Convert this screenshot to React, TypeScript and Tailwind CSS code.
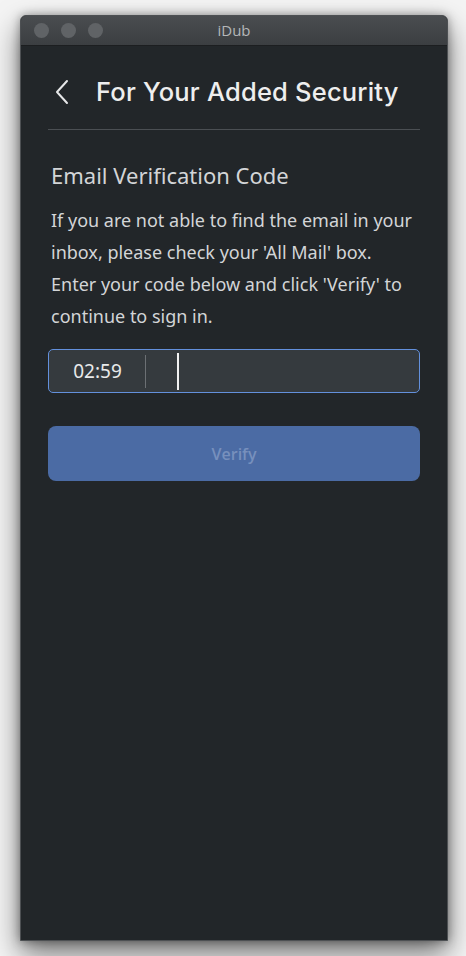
import React from "react";

export default function App() {
  return (
    <div className="w-[466px] h-[956px] pt-[15px] pl-[20px] overflow-hidden bg-[#f4f4f4]">
      <div className="w-[428px] h-[926px] flex flex-col rounded-t-[6px] overflow-hidden border border-[#4d5053] bg-[#222629] shadow-[0_12px_28px_rgba(0,0,0,0.55),0_0_10px_rgba(0,0,0,0.35)]">
        <div className="relative h-[30px] shrink-0 flex items-center bg-gradient-to-b from-[#4a4d50] to-[#3b3e41] border-b border-[#1c1e20]">
          <div className="flex items-center gap-[12px] pl-[13px]">
            <span className="w-[15px] h-[15px] rounded-full bg-[#606366]" />
            <span className="w-[15px] h-[15px] rounded-full bg-[#606366]" />
            <span className="w-[15px] h-[15px] rounded-full bg-[#606366]" />
          </div>
          <div className="absolute inset-0 flex items-center justify-center text-[15px] text-[#b4b6b8]" style={{ fontFamily: '"Open Sans", "Noto Sans", sans-serif' }}>
            iDub
          </div>
        </div>
        <div className="flex-1 px-[27px]">
          <div className="flex items-center h-[84px] pt-[9px] border-b border-[#4b4f53]">
            <svg width="16" height="26" viewBox="0 0 16 26" className="ml-[6px] shrink-0">
              <path d="M13 2 L3 13 L13 24" fill="none" stroke="#e6e7e8" strokeWidth="2" strokeLinecap="round" strokeLinejoin="round" />
            </svg>
            <div className="ml-[26px] text-[25.5px] font-medium text-[#eeeeee] tracking-[0.2px]" style={{ fontFamily: 'Inter, "Noto Sans", sans-serif' }}>
              For Your Added Security
            </div>
          </div>
          <div style={{ fontFamily: '"Noto Sans", "Open Sans", sans-serif' }} className="pl-[3px]">
            <div className="mt-[31px] text-[22px] leading-[28px] text-[#d3d5d7]">Email Verification Code</div>
            <p className="mt-[15px] text-[18px] leading-[32px] text-[#d3d5d7]">
              If you are not able to find the email in your inbox, please check your 'All Mail' box. Enter your code below and click 'Verify' to continue to sign in.
            </p>
          </div>
          <div className="mt-[17px] h-[44px] flex items-center rounded-[5px] border border-[#6390dc] bg-[#353a3e]" style={{ fontFamily: '"Noto Sans", "Open Sans", sans-serif' }}>
            <div className="w-[96px] text-center text-[19px] text-[#e8e9ea] pl-[1px]">02:59</div>
            <div className="w-px h-[33px] bg-[#6c7074]" />
            <div className="ml-[31px] w-[2px] h-[37px] bg-[#f2f2f2]" />
          </div>
          <div className="mt-[33px] h-[55px] rounded-[8px] bg-[#4b6ba4] flex items-center justify-center text-[16px] font-semibold text-[#7790bd]" style={{ fontFamily: '"Open Sans", "Noto Sans", sans-serif' }}>
            Verify
          </div>
        </div>
      </div>
    </div>
  );
}
